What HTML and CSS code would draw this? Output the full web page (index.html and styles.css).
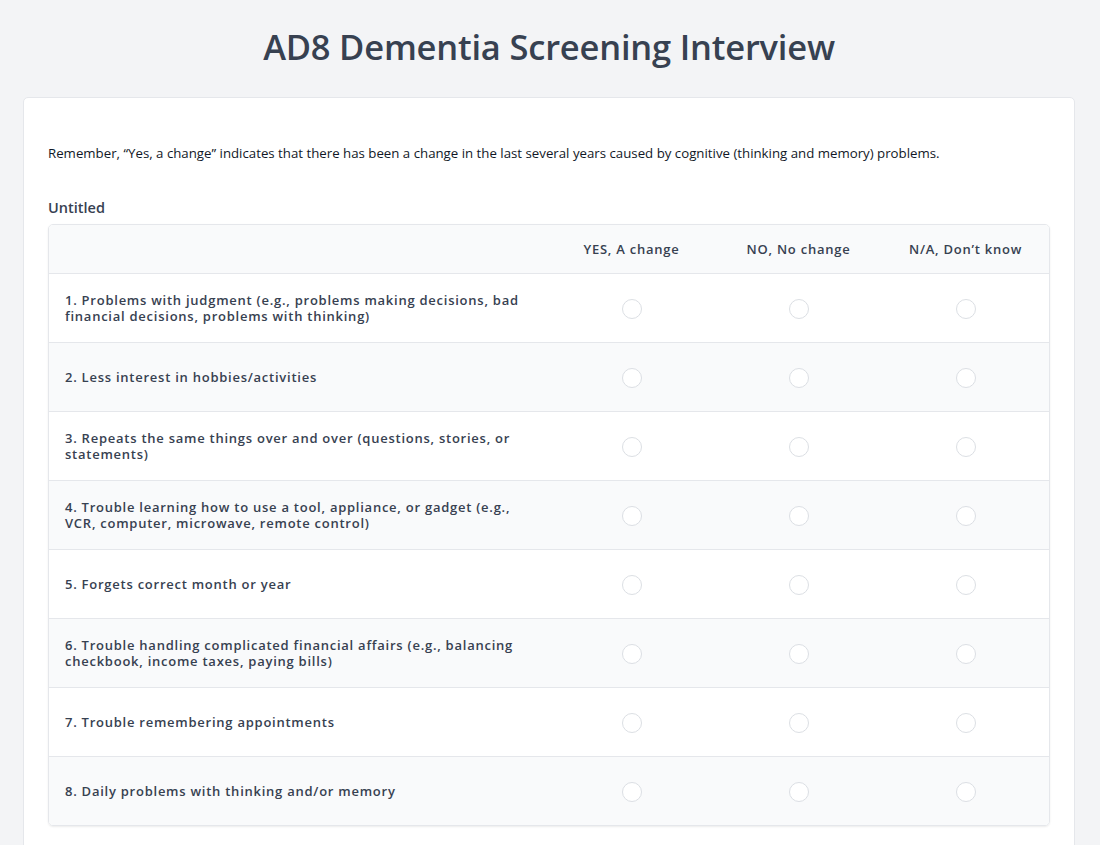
FILE: index.html
```html
<!DOCTYPE html>
<html lang="en">
<head>
<meta charset="utf-8">
<title>AD8 Dementia Screening Interview</title>
<link rel="stylesheet" href="styles.css">
</head>
<body>
<main class="page">
  <h1 class="title">AD8 Dementia Screening Interview</h1>
  <section class="card">
    <p class="intro">Remember, “Yes, a change” indicates that there has been a change in the last several years caused by cognitive (thinking and memory) problems.</p>
    <h2 class="section-title">Untitled</h2>
    <div class="matrix">
      <table>
        <colgroup>
          <col class="col-q">
          <col class="col-a">
          <col class="col-a">
          <col class="col-a">
        </colgroup>
        <thead>
          <tr>
            <th></th>
            <th>YES, A change</th>
            <th>NO, No change</th>
            <th>N/A, Don’t know</th>
          </tr>
        </thead>
        <tbody>
          <tr><td class="q">1. Problems with judgment (e.g., problems making decisions, bad financial decisions, problems with thinking)</td><td><span class="radio"></span></td><td><span class="radio"></span></td><td><span class="radio"></span></td></tr>
          <tr><td class="q">2. Less interest in hobbies/activities</td><td><span class="radio"></span></td><td><span class="radio"></span></td><td><span class="radio"></span></td></tr>
          <tr><td class="q">3. Repeats the same things over and over (questions, stories, or statements)</td><td><span class="radio"></span></td><td><span class="radio"></span></td><td><span class="radio"></span></td></tr>
          <tr><td class="q">4. Trouble learning how to use a tool, appliance, or gadget (e.g., VCR, computer, microwave, remote control)</td><td><span class="radio"></span></td><td><span class="radio"></span></td><td><span class="radio"></span></td></tr>
          <tr><td class="q">5. Forgets correct month or year</td><td><span class="radio"></span></td><td><span class="radio"></span></td><td><span class="radio"></span></td></tr>
          <tr><td class="q">6. Trouble handling complicated financial affairs (e.g., balancing checkbook, income taxes, paying bills)</td><td><span class="radio"></span></td><td><span class="radio"></span></td><td><span class="radio"></span></td></tr>
          <tr><td class="q">7. Trouble remembering appointments</td><td><span class="radio"></span></td><td><span class="radio"></span></td><td><span class="radio"></span></td></tr>
          <tr><td class="q">8. Daily problems with thinking and/or memory</td><td><span class="radio"></span></td><td><span class="radio"></span></td><td><span class="radio"></span></td></tr>
        </tbody>
      </table>
    </div>
  </section>
</main>
</body>
</html>
```

FILE: styles.css
```css
* { box-sizing: border-box; }

html, body {
  margin: 0;
  padding: 0;
  background: #f3f4f6;
  font-family: "Open Sans", "Noto Sans", "Liberation Sans", sans-serif;
  color: #374151;
}

.page {
  padding: 0 25px 0 23px;
}

.title {
  margin: 0;
  padding: 24px 0 27px;
  text-align: center;
  font-size: 34.5px;
  line-height: 46px;
  font-weight: 600;
  color: #374151;
  letter-spacing: -0.2px;
}

.card {
  background: #fff;
  border: 1px solid #e5e7eb;
  border-radius: 5px;
  padding: 45px 24px 40px;
  min-height: 760px;
}

.intro {
  margin: 0 0 34px;
  font-size: 13.25px;
  line-height: 20px;
  color: #111827;
}

.section-title {
  margin: 0 0 5px;
  font-size: 14.5px;
  line-height: 22px;
  font-weight: 600;
  color: #374151;
}

.matrix {
  border: 1px solid #e5e7eb;
  border-radius: 5px;
  overflow: hidden;
  box-shadow: 0 1px 2px rgba(0, 0, 0, 0.08);
}

table {
  width: 100%;
  border-collapse: collapse;
  table-layout: fixed;
}

.col-q { width: 499px; }

th {
  height: 48px;
  background: #f9fafb;
  font-size: 13px;
  font-weight: 600;
  letter-spacing: 0.75px;
  color: #374151;
  text-align: center;
  padding: 0 4px;
  border-bottom: 1px solid #e5e7eb;
}

td {
  height: 69px;
  text-align: center;
  vertical-align: middle;
  border-bottom: 1px solid #e5e7eb;
}

tbody tr:last-child td { border-bottom: none; }

tbody tr:nth-child(even) td { background: #f9fafb; }

td.q {
  text-align: left;
  padding: 0 20px 0 16px;
  font-size: 13px;
  line-height: 16px;
  font-weight: 600;
  letter-spacing: 0.75px;
  color: #374151;
}

.radio {
  display: inline-block;
  width: 20px;
  height: 20px;
  border: 1px solid #dcdfe4;
  border-radius: 50%;
  background: #fff;
  vertical-align: middle;
}
```
